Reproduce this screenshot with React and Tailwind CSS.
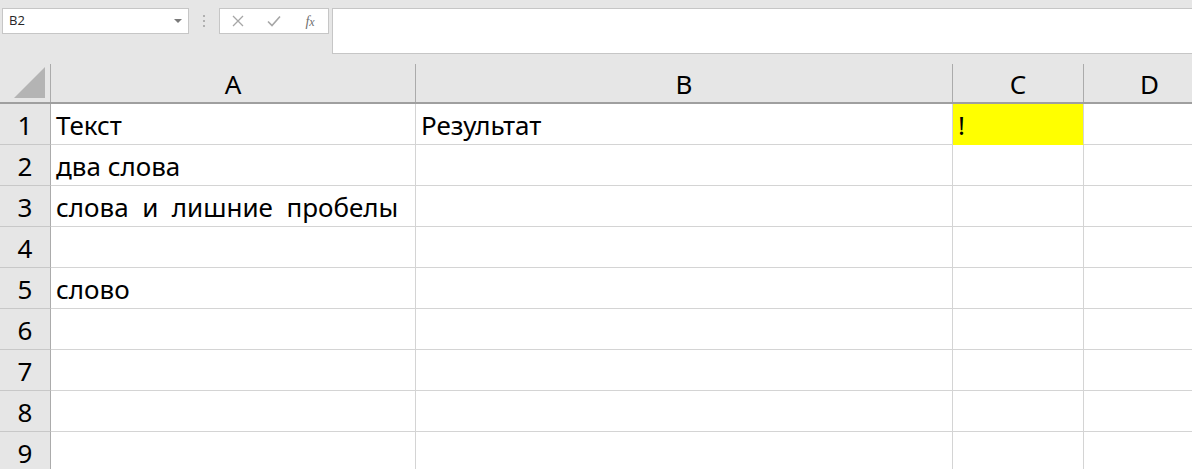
import React from "react";

const font = { fontFamily: '"Noto Sans", "Open Sans", sans-serif' };

const rows = [
  ["Текст", "Результат", "!", ""],
  ["два слова", "", "", ""],
  ["слова  и  лишние  пробелы", "", "", ""],
  ["", "", "", ""],
  ["слово", "", "", ""],
  ["", "", "", ""],
  ["", "", "", ""],
  ["", "", "", ""],
  ["", "", "", ""],
];

function TopBar() {
  return (
    <div className="h-[64px] bg-[#e6e6e6] flex items-start pt-[8px] shrink-0" style={{ fontFamily: '"Open Sans", "Noto Sans", sans-serif' }}>
      <div className="ml-[2px] w-[187px] h-[26px] bg-white border border-[#c6c6c6] flex items-center pl-[6px] pr-[5px] justify-between">
        <span className="text-[13px] text-[#262626]">B2</span>
        <svg width="10" height="6" viewBox="0 0 10 6"><path d="M1 1h8L5 5z" fill="#7a7a7a" /></svg>
      </div>
      <div className="w-[30px] h-[26px] flex flex-col items-center justify-center gap-[3px]">
        <div className="w-[2px] h-[2px] bg-[#b0b0b0]" />
        <div className="w-[2px] h-[2px] bg-[#b0b0b0]" />
        <div className="w-[2px] h-[2px] bg-[#b0b0b0]" />
      </div>
      <div className="w-[110px] h-[26px] bg-white border border-[#c6c6c6] flex items-center">
        <div className="w-[36px] flex justify-center">
          <svg width="12" height="12" viewBox="0 0 12 12"><path d="M1 1L11 11M11 1L1 11" stroke="#a6a6a6" strokeWidth="1.3" /></svg>
        </div>
        <div className="w-[36px] flex justify-center">
          <svg width="14" height="12" viewBox="0 0 14 12"><path d="M1 6.5L5 10.5L13 1.5" stroke="#a6a6a6" strokeWidth="1.6" fill="none" /></svg>
        </div>
        <div className="w-[36px] flex justify-center">
          <span className="text-[14px] italic text-[#6f6f6f]" style={{ fontFamily: '"Liberation Serif", serif' }}>f<span className="text-[12px]">x</span></span>
        </div>
      </div>
      <div className="ml-[3px] flex-1 h-[46px] bg-white border border-[#c6c6c6] border-r-0" />
    </div>
  );
}

const widths = ["w-[365px]", "w-[537px]", "w-[131px]"];

export default function App() {
  return (
    <div className="w-[1192px] h-[469px] overflow-hidden bg-white flex flex-col text-black" style={font}>
      <TopBar />
      <div className="flex h-[40px] bg-[#e6e6e6] border-b-2 border-[#9f9f9f] shrink-0">
        <div className="w-[51px] shrink-0 h-full border-r border-[#ababab] flex items-end justify-end pr-[4px] pb-[3px]">
          <svg width="32" height="32" viewBox="0 0 32 32"><path d="M31 0V31H0z" fill="#b4b4b4" /></svg>
        </div>
        {["A", "B", "C"].map((c, i) => (
          <div key={c} className={`${widths[i]} shrink-0 h-full border-r border-[#ababab] flex items-center justify-center text-[26px] leading-none pt-[2px]`}>{c}</div>
        ))}
        <div className="w-[131px] shrink-0 h-full flex items-center justify-center text-[26px] leading-none pt-[2px]">D</div>
      </div>
      {rows.map((r, ri) => (
        <div key={ri} className="flex h-[41px] shrink-0">
          <div className="w-[51px] shrink-0 h-full bg-[#e6e6e6] border-r border-[#ababab] border-b border-b-[#c8c8c8] flex items-center justify-center text-[26px] leading-none pt-[2px]">{ri + 1}</div>
          {r.slice(0, 3).map((v, ci) => (
            <div
              key={ci}
              className={`${widths[ci]} shrink-0 h-full flex items-center pl-[5px] pt-[2px] text-[26px] leading-none whitespace-pre ${ri === 0 && ci === 2 ? "bg-[#ffff00] border-b border-b-[#ffff00] border-r border-r-[#d4d4d4]" : "border-r border-b border-[#d4d4d4]"}`}
            >
              {v}
            </div>
          ))}
          <div className="flex-1 h-full border-b border-[#d4d4d4]" />
        </div>
      ))}
    </div>
  );
}
